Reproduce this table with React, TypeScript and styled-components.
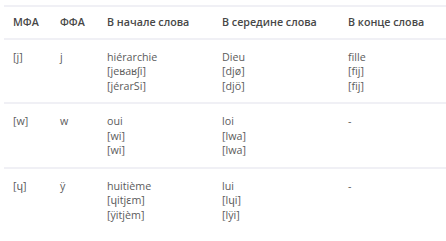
import styled, { createGlobalStyle } from 'styled-components';

const GlobalStyle = createGlobalStyle`
  body {
    margin: 0;
    background: #ffffff;
    font-family: "Open Sans", "Noto Sans", sans-serif;
  }
`;

const Wrap = styled.div`
  padding: 5px 0 0 4px;
`;

const Table = styled.table`
  width: 442px;
  table-layout: fixed;
  border-collapse: collapse;
  border-top: 2px solid #f0f0f5;
  font-size: 10.7px;
  line-height: 14.5px;
  color: #5c5c5c;
`;

const Head = styled.th<{ w: number }>`
  box-sizing: border-box;
  width: ${p => p.w}px;
  text-align: left;
  font-weight: 600;
  color: #474747;
  padding: 8px 9px 8px 9px;
  border-bottom: 2px solid #f0f0f5;
  white-space: nowrap;
  overflow: visible;
`;

const Row = styled.tr`
  & + & td {
    border-top: 2px solid #f0f0f5;
  }
`;

const Cell = styled.td`
  vertical-align: top;
  padding: 10px 9px 9px 9px;
  white-space: nowrap;
`;

const Line = styled.div``;

const columns = [
  { title: 'МФА', w: 47 },
  { title: 'ФФА', w: 47 },
  { title: 'В начале слова', w: 115 },
  { title: 'В середине слова', w: 126 },
  { title: 'В конце слова', w: 107 },
];

const rows: string[][][] = [
  [['[j]'], ['j'], ['hiérarchie', '[jeʁaʁʃi]', '[jérarSi]'], ['Dieu', '[djø]', '[djö]'], ['fille', '[fij]', '[fij]']],
  [['[w]'], ['w'], ['oui', '[wi]', '[wi]'], ['loi', '[lwa]', '[lwa]'], ['-']],
  [['[ɥ]'], ['ÿ'], ['huitième', '[ɥitjɛm]', '[ÿitjèm]'], ['lui', '[lɥi]', '[lÿi]'], ['-']],
];

export default function App() {
  return (
    <>
      <GlobalStyle />
      <Wrap>
        <Table>
          <thead>
            <tr>
              {columns.map(c => (
                <Head key={c.title} w={c.w}>{c.title}</Head>
              ))}
            </tr>
          </thead>
          <tbody>
            {rows.map((r, i) => (
              <Row key={i}>
                {r.map((cell, j) => (
                  <Cell key={j}>
                    {cell.map((t, k) => <Line key={k}>{t}</Line>)}
                  </Cell>
                ))}
              </Row>
            ))}
          </tbody>
        </Table>
      </Wrap>
    </>
  );
}
